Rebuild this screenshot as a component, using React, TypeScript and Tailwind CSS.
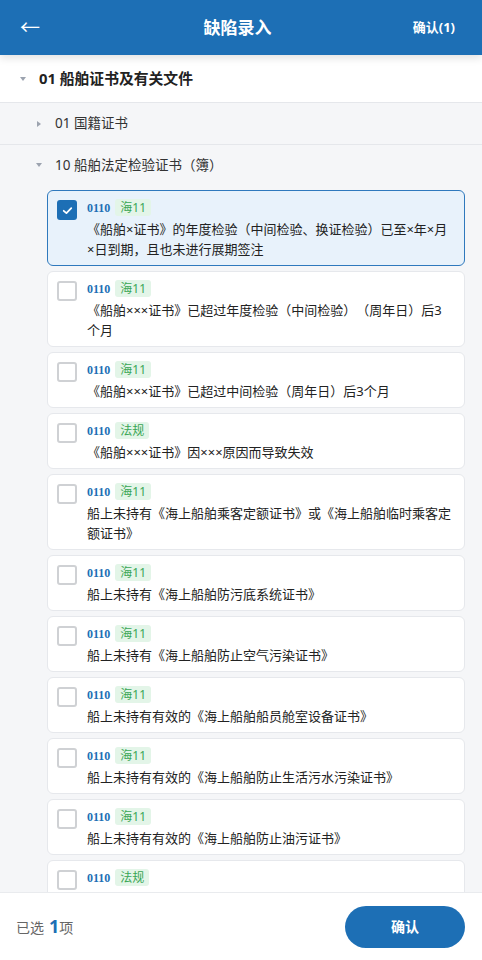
import React from "react";

type Item = { tag: string; text: string; checked?: boolean };

const items: Item[] = [
  { tag: "海11", text: "《船舶×证书》的年度检验（中间检验、换证检验）已至×年×月×日到期，且也未进行展期签注", checked: true },
  { tag: "海11", text: "《船舶×××证书》已超过年度检验（中间检验）（周年日）后3个月" },
  { tag: "海11", text: "《船舶×××证书》已超过中间检验（周年日）后3个月" },
  { tag: "法规", text: "《船舶×××证书》因×××原因而导致失效" },
  { tag: "海11", text: "船上未持有《海上船舶乘客定额证书》或《海上船舶临时乘客定额证书》" },
  { tag: "海11", text: "船上未持有《海上船舶防污底系统证书》" },
  { tag: "海11", text: "船上未持有《海上船舶防止空气污染证书》" },
  { tag: "海11", text: "船上未持有有效的《海上船舶船员舱室设备证书》" },
  { tag: "海11", text: "船上未持有有效的《海上船舶防止生活污水污染证书》" },
  { tag: "海11", text: "船上未持有有效的《海上船舶防止油污证书》" },
  { tag: "法规", text: "船上未携带《海上船舶乘客定额证书》或《海上船舶临时乘客定额证书》" },
];

function TriDown() {
  return (
    <svg width="6" height="4" viewBox="0 0 6 4" className="shrink-0">
      <path d="M0 0 L6 0 L3 4 Z" fill="#9ca3af" />
    </svg>
  );
}
function TriRight() {
  return (
    <svg width="4" height="6" viewBox="0 0 4 6" className="shrink-0">
      <path d="M0 0 L4 3 L0 6 Z" fill="#9ca3af" />
    </svg>
  );
}

function Card({ item }: { item: Item }) {
  const sel = !!item.checked;
  return (
    <div
      className={
        sel
          ? "flex gap-[10px] rounded-[6px] border border-[#2f79bd] bg-[#e8f2fb] pl-[9px] pr-[11px] pt-[8px] pb-[6px]"
          : "flex gap-[10px] rounded-[6px] border border-[#e6e8ec] bg-white pl-[9px] pr-[11px] pt-[8px] pb-[6px]"
      }
    >
      <div className="pt-[1px]">
        {sel ? (
          <div className="flex h-[20px] w-[20px] items-center justify-center rounded-[3px] bg-[#1d6fb5]">
            <svg width="13" height="13" viewBox="0 0 24 24" fill="none" stroke="white" strokeWidth="3.2" strokeLinecap="round" strokeLinejoin="round">
              <path d="M5 12.5 L10 17 L19 7.5" />
            </svg>
          </div>
        ) : (
          <div className="h-[20px] w-[20px] rounded-[3px] border-2 border-[#cfd1d4] bg-white" />
        )}
      </div>
      <div className="min-w-0 flex-1">
        <div className="flex h-[17px] items-center gap-[5px]">
          <span className="text-[12px] font-bold leading-none text-[#1d6fb5] [font-family:'Liberation_Serif','Noto_Sans_CJK_SC',serif]">0110</span>
          <span className="rounded-[3px] bg-[#e3f5e8] px-[5px] text-[12px] leading-[17px] text-[#3aa655]">{item.tag}</span>
        </div>
        <div className="mt-[3px] text-[13px] leading-[20px] text-[#222] [text-spacing-trim:space-all]">{item.text}</div>
      </div>
    </div>
  );
}

export default function App() {
  return (
    <div className="flex h-[960px] w-full flex-col overflow-hidden bg-[#f5f6f8] [font-family:'Noto_Sans','Noto_Sans_CJK_SC',sans-serif] [text-spacing-trim:space-all]">
      <div className="relative z-10 flex h-[55px] shrink-0 items-center justify-between bg-[#1d6fb5] pl-[20px] pr-[27px] shadow-[0_3px_8px_rgba(0,0,0,0.12)]">
        <span className="w-[60px] text-[20px] leading-none text-white">←</span>
        <span className="text-[17px] font-bold text-white">缺陷录入</span>
        <span className="w-[60px] text-right text-[13px] font-bold text-white">确认(1)</span>
      </div>

      <div className="min-h-0 flex-1 overflow-hidden">
        <div className="flex h-[48px] items-center gap-[13px] border-b border-[#e5e7eb] bg-white pl-[20px]">
          <TriDown />
          <span className="text-[14.8px] font-bold text-[#222]">01 船舶证书及有关文件</span>
        </div>
        <div className="flex h-[42px] items-center gap-[14px] border-b border-[#e5e7eb] pl-[37px]">
          <TriRight />
          <span className="text-[13.5px] text-[#333]">01 国籍证书</span>
        </div>
        <div className="flex h-[40px] items-center gap-[13px] pl-[36px]">
          <TriDown />
          <span className="text-[13.5px] text-[#333]">10 船舶法定检验证书（簿）</span>
        </div>
        <div className="ml-[47px] mr-[17px] mt-[5px] flex flex-col gap-[5px]">
          {items.map((it, i) => (
            <Card key={i} item={it} />
          ))}
        </div>
      </div>

      <div className="flex h-[68px] shrink-0 items-center justify-between border-t border-[#e9ebee] bg-white pl-[16px] pr-[17px]">
        <div className="flex items-baseline text-[14px] text-[#666]">
          <span>已选</span>
          <span className="ml-[5px] text-[18px] font-bold text-[#1d6fb5]">1</span>
          <span>项</span>
        </div>
        <button className="h-[42px] w-[120px] rounded-full bg-[#1d6fb5] text-[14px] font-bold text-white">确认</button>
      </div>
    </div>
  );
}
